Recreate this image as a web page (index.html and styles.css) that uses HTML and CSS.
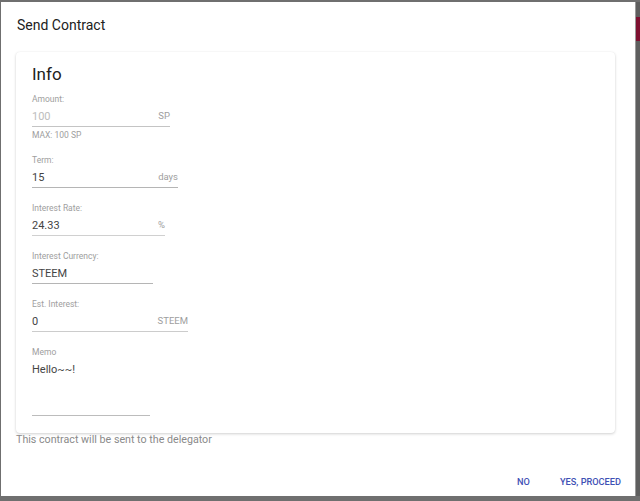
FILE: index.html
```html
<!DOCTYPE html>
<html lang="en">

<head>
    <title>Send Contract</title>
    <meta charset="UTF-8">
    <link rel="stylesheet" href="styles.css">
</head>

<body>
<div class="screen">
    <!-- 다이얼로그 -->
    <div class="dialog">
        <div class="dialog-title">Send Contract</div>

        <div class="card">
            <h2 class="card-title">Info</h2>

            <div class="field field-amount">
                <div class="field-label">Amount:</div>
                <div class="field-row">
                    <span class="field-value disabled">100</span>
                    <span class="field-suffix">SP</span>
                </div>
            </div>
            <div class="field-hint">MAX: 100 SP</div>

            <div class="field field-term">
                <div class="field-label">Term:</div>
                <div class="field-row">
                    <span class="field-value">15</span>
                    <span class="field-suffix">days</span>
                </div>
            </div>

            <div class="field field-rate">
                <div class="field-label">Interest Rate:</div>
                <div class="field-row">
                    <span class="field-value">24.33</span>
                    <span class="field-suffix">%</span>
                </div>
            </div>

            <div class="field field-currency">
                <div class="field-label">Interest Currency:</div>
                <div class="field-row">
                    <span class="field-value">STEEM</span>
                </div>
            </div>

            <div class="field field-est">
                <div class="field-label">Est. Interest:</div>
                <div class="field-row">
                    <span class="field-value">0</span>
                    <span class="field-suffix">STEEM</span>
                </div>
            </div>

            <div class="field field-memo">
                <div class="field-label">Memo</div>
                <div class="field-row memo-row">
                    <span class="field-value">Hello~~!</span>
                </div>
            </div>
        </div>

        <p class="notice">This contract will be sent to the delegator</p>

        <div class="actions">
            <button class="btn">NO</button>
            <button class="btn">YES, PROCEED</button>
        </div>
    </div>

    <!-- 뒤쪽 화면 조각 -->
    <div class="side">
        <div class="side-mark"></div>
    </div>
</div>
</body>

</html>
```

FILE: styles.css
```css
/* 전체 배경 */
body {
    margin: 0;
    padding: 0;
    background-color: #6f6f6f;
    font-family: Roboto, 'Liberation Sans', sans-serif;
    height: 501px;
    overflow: hidden;
}

.screen {
    display: flex;
    align-items: flex-start;
    padding: 2px 0 0 1px;
}

/* 다이얼로그 */
.dialog {
    width: 635px;
    height: 494px;
    background-color: #ffffff;
    box-sizing: border-box;
    padding: 13px 20px 0 15px;
    display: flex;
    flex-direction: column;
}

.dialog-title {
    font-size: 14px;
    line-height: 20px;
    color: #212121;
    padding-left: 1px;
    margin-bottom: 17px;
}

/* 카드 */
.card {
    border-radius: 4px;
    box-shadow: 0 1px 3px rgba(0, 0, 0, 0.18), 0 0 1px rgba(0, 0, 0, 0.08);
    padding: 10px 16px 17px 16px;
    height: 381px;
    box-sizing: border-box;
}

.card-title {
    margin: 0 0 8px 0;
    font-size: 17px;
    font-weight: 400;
    line-height: 24px;
    color: #212121;
}

/* 입력 필드 */
.field {
    margin-bottom: 15px;
}

.field-label {
    font-size: 8.5px;
    line-height: 11px;
    color: #9e9e9e;
}

.field-row {
    display: flex;
    justify-content: space-between;
    align-items: center;
    margin-top: 2px;
    height: 16px;
    padding-top: 2px;
    padding-bottom: 1px;
    border-bottom: 1px solid #b5b5b5;
}

.field-value {
    font-size: 11px;
    line-height: 16px;
    color: #444444;
}

.field-value.disabled {
    color: #bdbdbd;
}

.field-suffix {
    font-size: 9.5px;
    color: #9e9e9e;
    margin-bottom: 3px;
}

.field-amount {
    width: 138px;
    margin-bottom: 3px;
}

.field-amount .field-row {
    border-bottom-color: #c4c4c4;
}

.field-term {
    width: 146px;
}

.field-rate {
    width: 133px;
}

.field-rate .field-row {
    border-bottom-color: #d0d0d0;
}

.field-currency {
    width: 121px;
}

.field-est {
    width: 156px;
}

.field-est .field-row {
    border-bottom-color: #cccccc;
}

.field-memo {
    width: 118px;
    margin-bottom: 0;
}

.memo-row {
    height: 52px;
    align-items: flex-start;
    border-bottom-color: #bcbcbc;
}

.field-hint {
    font-size: 8.5px;
    line-height: 11px;
    color: #9e9e9e;
    margin-bottom: 14px;
}

/* 안내 문구 */
.notice {
    margin: 0;
    font-size: 10.7px;
    line-height: 14px;
    color: #8a8a8a;
}

/* 버튼 */
.actions {
    margin-top: auto;
    display: flex;
    justify-content: flex-end;
    gap: 14px;
    padding-bottom: 5px;
    margin-right: -14px;
}

.btn {
    background: none;
    border: none;
    padding: 4px 8px;
    font-family: Roboto, 'Liberation Sans', sans-serif;
    font-size: 9.2px;
    font-weight: 500;
    color: #3f51b5;
    cursor: pointer;
}

/* 오른쪽 배경 조각 */
.side {
    width: 4px;
    height: 494px;
    border-left: 1px solid #9a9a9a;
    background-color: #5e5e5e;
}

.side-mark {
    margin-top: 15px;
    height: 24px;
    background-color: #7e1030;
}
```
